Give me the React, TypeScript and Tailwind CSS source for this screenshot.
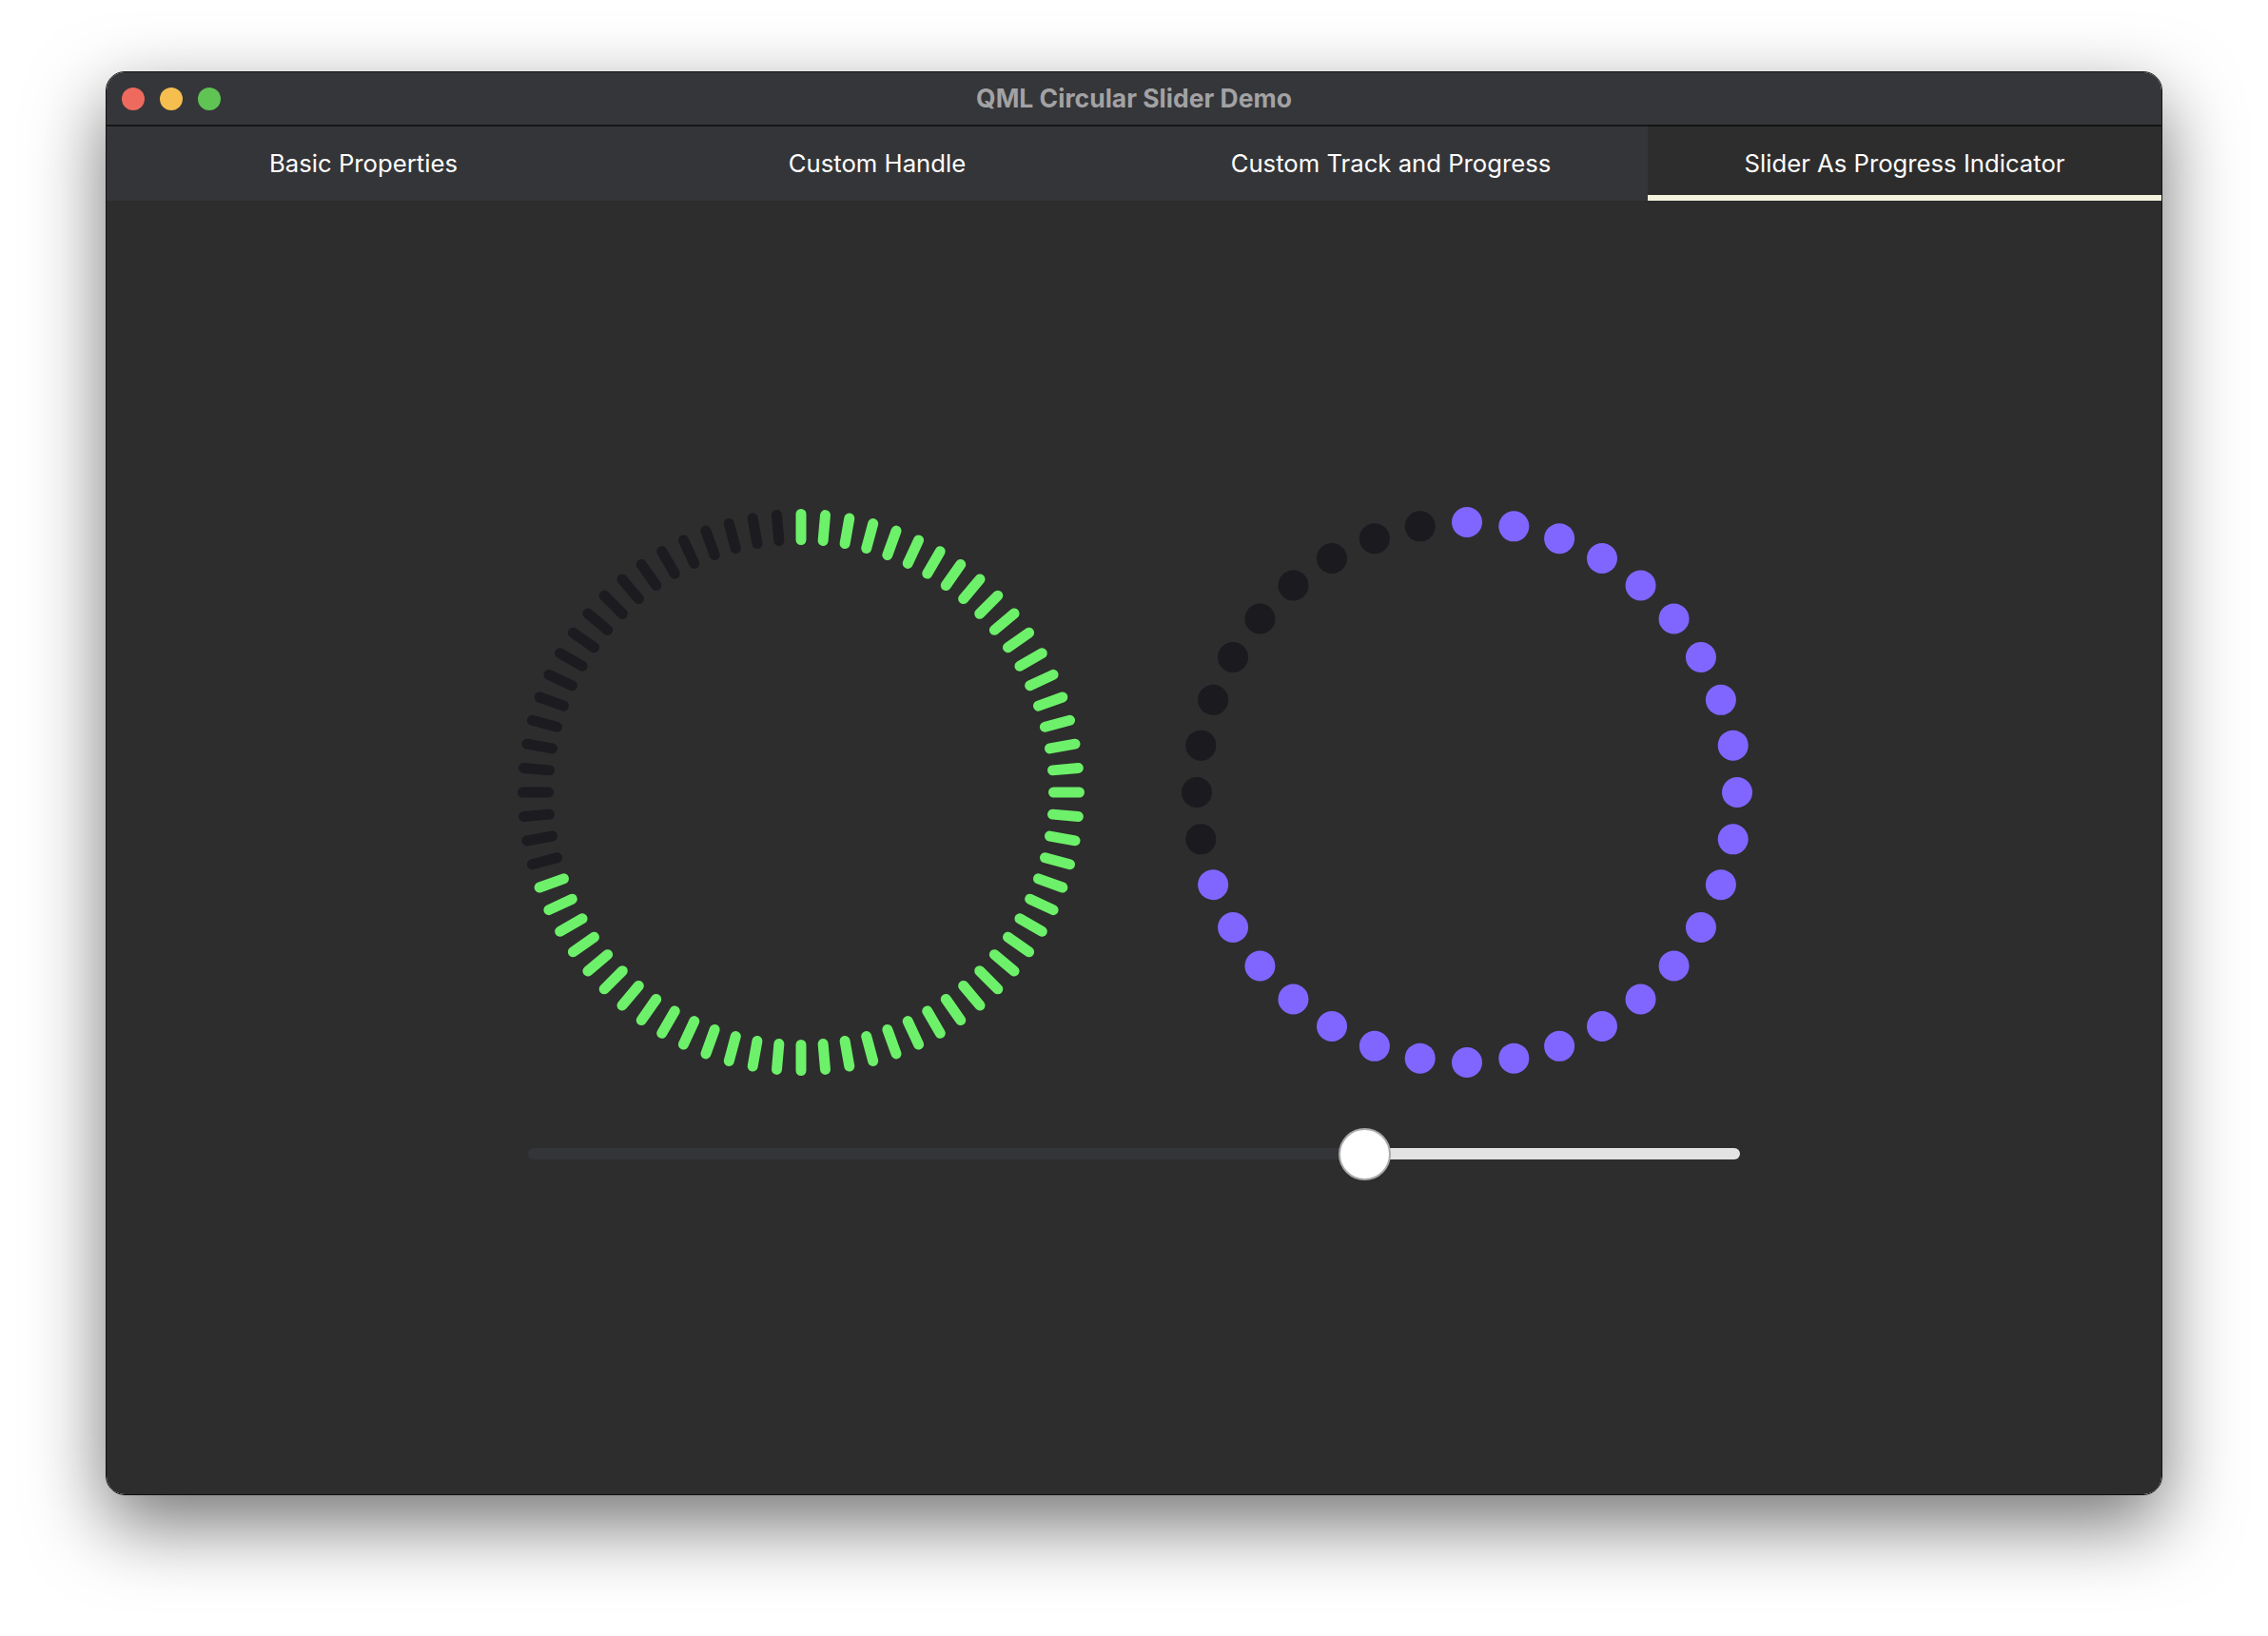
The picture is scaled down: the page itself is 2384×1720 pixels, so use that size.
import React from "react";

const tabs = [
  "Basic Properties",
  "Custom Handle",
  "Custom Track and Progress",
  "Slider As Progress Indicator",
];

const VALUE = 0.695;

function TickRing() {
  const cx = 300;
  const cy = 300;
  const ticks = Array.from({ length: 72 }, (_, i) => i * 5);
  return (
    <svg width="600" height="600" viewBox="0 0 600 600">
      {ticks.map((deg) => {
        const a = (deg * Math.PI) / 180;
        const s = Math.sin(a);
        const c = Math.cos(a);
        const on = deg <= VALUE * 360;
        return (
          <line
            key={deg}
            x1={cx + 265.5 * s}
            y1={cy - 265.5 * c}
            x2={cx + 292.5 * s}
            y2={cy - 292.5 * c}
            stroke={on ? "#6df06a" : "#1b1b20"}
            strokeWidth={11}
            strokeLinecap="round"
          />
        );
      })}
    </svg>
  );
}

function DotRing() {
  const cx = 300;
  const cy = 300;
  const dots = Array.from({ length: 36 }, (_, i) => i * 10);
  return (
    <svg width="600" height="600" viewBox="0 0 600 600">
      {dots.map((deg) => {
        const a = (deg * Math.PI) / 180;
        const on = deg <= VALUE * 360;
        return (
          <circle
            key={deg}
            cx={cx + 284 * Math.sin(a)}
            cy={cy - 284 * Math.cos(a)}
            r={16}
            fill={on ? "#8066ff" : "#1a1a1f"}
          />
        );
      })}
    </svg>
  );
}

function Slider() {
  const pos = 879;
  return (
    <div className="relative mt-[52px] flex h-[56px] w-[1274px] items-center">
      <div className="flex h-[12px] w-full overflow-hidden rounded-full">
        <div className="h-full bg-[#343538]" style={{ width: pos }} />
        <div className="h-full flex-1 bg-[#e3e3e3]" />
      </div>
      <div
        className="absolute top-[0.5px] h-[55px] w-[55px] rounded-full border-2 border-[#a9a9a9] bg-white"
        style={{ left: pos - 27.5 }}
      />
    </div>
  );
}

export default function App() {
  return (
    <div className="h-[1720px] w-[2384px] bg-white pl-[111px] pt-[75px] font-['Inter','Noto_Sans',sans-serif]">
      <div className="flex h-[1497px] w-[2162px] flex-col overflow-hidden rounded-[20px] border border-[#111] shadow-[0_30px_80px_rgba(0,0,0,0.55)]">
        {/* title bar */}
        <div className="relative flex h-[57px] shrink-0 items-center justify-center border-b-2 border-[#151515] bg-[#353639]">
          <div className="absolute left-[16px] top-[16px] flex gap-[16px]">
            <span className="h-[24px] w-[24px] rounded-full bg-[#ee6a5f]" />
            <span className="h-[24px] w-[24px] rounded-full bg-[#f5be4f]" />
            <span className="h-[24px] w-[24px] rounded-full bg-[#5fc454]" />
          </div>
          <span className="text-[26.5px] font-bold text-[#a2a2a4]">QML Circular Slider Demo</span>
        </div>

        {/* tabs */}
        <div className="grid h-[78px] shrink-0 grid-cols-4 bg-[#343538]">
          {tabs.map((t, i) => {
            const active = i === tabs.length - 1;
            return (
              <div
                key={t}
                className={
                  active
                    ? "relative flex items-center justify-center bg-[#2d2d2d] text-[25.7px] text-white"
                    : "relative flex items-center justify-center text-[25.7px] text-white"
                }
              >
                {t}
                {active && <span className="absolute bottom-0 left-0 h-[6px] w-full bg-[#f4f2dc]" />}
              </div>
            );
          })}
        </div>

        {/* content */}
        <div className="flex flex-1 flex-col items-center bg-[#2d2d2d] pt-[322px]">
          <div className="flex gap-[100px]">
            <TickRing />
            <DotRing />
          </div>
          <Slider />
        </div>
      </div>
    </div>
  );
}
